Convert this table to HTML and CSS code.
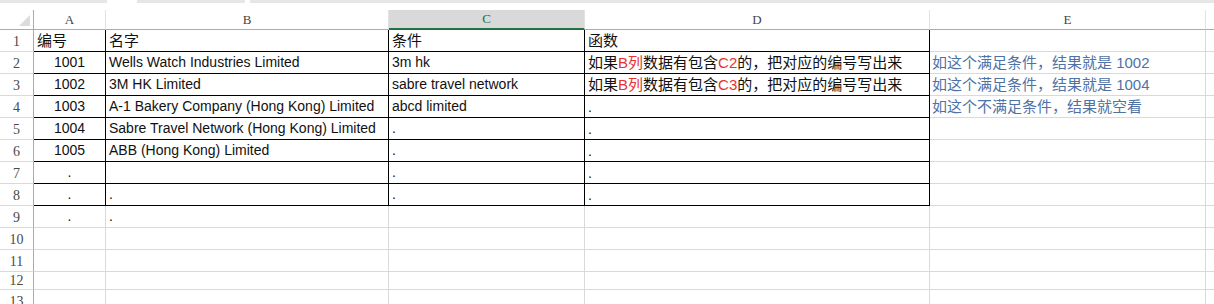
FILE: index.html
```html
<!DOCTYPE html>
<html lang="zh">
<head>
    <meta charset="UTF-8">
    <title>工作表</title>
    <link rel="stylesheet" href="styles.css">
</head>
<body>
    <div class="tabs">
        <span class="tab t1"></span>
        <span class="tab t2"></span>
        <span class="tab t3"></span>
    </div>
    <table class="sheet">
        <colgroup>
            <col class="c-rh"><col class="c-a"><col class="c-b"><col class="c-c"><col class="c-d"><col class="c-e"><col>
        </colgroup>
        <tr class="head">
            <th class="corner"><span class="tri"></span></th>
            <th>A</th><th>B</th><th class="sel">C</th><th>D</th><th>E</th><th></th>
        </tr>
        <tr>
            <th>1</th>
            <td class="k cj">编号</td><td class="k cj">名字</td><td class="k cj">条件</td><td class="k cj">函数</td><td></td><td></td>
        </tr>
        <tr>
            <th>2</th>
            <td class="k num">1001</td><td class="k">Wells Watch Industries Limited</td><td class="k">3m hk</td>
            <td class="k cj">如果<em>B列</em>数据有包含<em>C2</em>的，把对应的编号写出来</td>
            <td class="note cj">如这个满足条件，结果就是 1002</td><td></td>
        </tr>
        <tr>
            <th>3</th>
            <td class="k num">1002</td><td class="k">3M HK Limited</td><td class="k">sabre travel network</td>
            <td class="k cj">如果<em>B列</em>数据有包含<em>C3</em>的，把对应的编号写出来</td>
            <td class="note cj">如这个满足条件，结果就是 1004</td><td></td>
        </tr>
        <tr>
            <th>4</th>
            <td class="k num">1003</td><td class="k">A-1 Bakery Company (Hong Kong) Limited</td><td class="k">abcd limited</td>
            <td class="k dot">.</td>
            <td class="note cj">如这个不满足条件，结果就空看</td><td></td>
        </tr>
        <tr>
            <th>5</th>
            <td class="k num">1004</td><td class="k">Sabre Travel Network (Hong Kong) Limited</td><td class="k">.</td><td class="k dot">.</td><td></td><td></td>
        </tr>
        <tr>
            <th>6</th>
            <td class="k num">1005</td><td class="k">ABB (Hong Kong) Limited</td><td class="k">.</td><td class="k dot">.</td><td></td><td></td>
        </tr>
        <tr>
            <th>7</th>
            <td class="k num">.</td><td class="k"></td><td class="k">.</td><td class="k dot">.</td><td></td><td></td>
        </tr>
        <tr>
            <th>8</th>
            <td class="k num">.</td><td class="k">.</td><td class="k">.</td><td class="k dot">.</td><td></td><td></td>
        </tr>
        <tr>
            <th>9</th>
            <td class="num">.</td><td>.</td><td></td><td></td><td></td><td></td>
        </tr>
        <tr><th>10</th><td></td><td></td><td></td><td></td><td></td><td></td></tr>
        <tr><th>11</th><td></td><td></td><td></td><td></td><td></td><td></td></tr>
        <tr class="short"><th>12</th><td></td><td></td><td></td><td></td><td></td><td></td></tr>
        <tr><th>13</th><td></td><td></td><td></td><td></td><td></td><td></td></tr>
    </table>
</body>
</html>
```

FILE: styles.css
```css
body {
    margin: 0;
    background: #fff;
    overflow: hidden;
    font-family: "Liberation Sans", "Noto Sans CJK SC", sans-serif;
}
.tabs {
    height: 10px;
    display: flex;
}
.tab {
    height: 3px;
    background: #e6e6e6;
}
.t1 { width: 107px; }
.t2 { width: 108px; margin-left: 30px; }
.t3 { flex: 1; margin-left: 5px; }

.sheet {
    border-collapse: separate;
    border-spacing: 0;
    table-layout: fixed;
    width: 1240px;
}
.c-rh { width: 34px; }
.c-a { width: 72px; }
.c-b { width: 283px; }
.c-c { width: 196px; }
.c-d { width: 345px; }
.c-e { width: 276px; }

.sheet tr {
    height: 22px;
}
.sheet th {
    font-family: "Liberation Serif", serif;
    font-weight: normal;
    font-size: 14px;
    color: #4a4a4a;
    padding: 2px 0 0;
    background: #fff;
    border-right: 1px solid #ababab;
    border-bottom: 1px solid #d9d9d9;
    text-align: center;
    height: 19px;
    line-height: 19px;
    overflow: hidden;
}
.sheet td {
    font-size: 14px;
    color: #111;
    padding: 0 0 0 3px;
    height: 21px;
    line-height: 21px;
    white-space: nowrap;
    overflow: hidden;
    border-right: 1px solid #d9d9d9;
    border-bottom: 1px solid #d9d9d9;
    vertical-align: bottom;
}
.sheet td.cj {
    font-size: 15px;
    line-height: 20px;
}
.sheet .head {
    height: 19px;
}
.sheet .head th {
    height: 18px;
    line-height: 18px;
    padding: 0;
    font-size: 13px;
    color: #444;
    border-right: 1px solid #e2e2e2;
    border-bottom: 1px solid #ababab;
    vertical-align: middle;
}
.sheet .head th.corner {
    position: relative;
    border-right: 1px solid #ababab;
}
.tri {
    position: absolute;
    right: 3px;
    bottom: 3px;
    width: 0;
    height: 0;
    border-left: 11px solid transparent;
    border-bottom: 11px solid #dcdcdc;
}
.sheet .head th.sel {
    background: #d9d9d9;
    color: #217346;
    border-bottom: 2px solid #217346;
    height: 17px;
}
.sheet .short {
    height: 18px;
}
.short th {
    height: 17px;
    line-height: 17px;
    padding-top: 0;
}
.short td {
    height: 17px;
    line-height: 17px;
}

.sheet td.k {
    border-right-color: #000;
    border-bottom-color: #000;
}
.num {
    text-align: center;
}
.sheet td.num { padding-left: 0; }
.sheet td.dot {
    line-height: 19px;
}
em {
    font-style: normal;
    color: #e8322e;
}
.sheet td.note {
    color: #4f72a6;
    padding-left: 2px;
}
```
